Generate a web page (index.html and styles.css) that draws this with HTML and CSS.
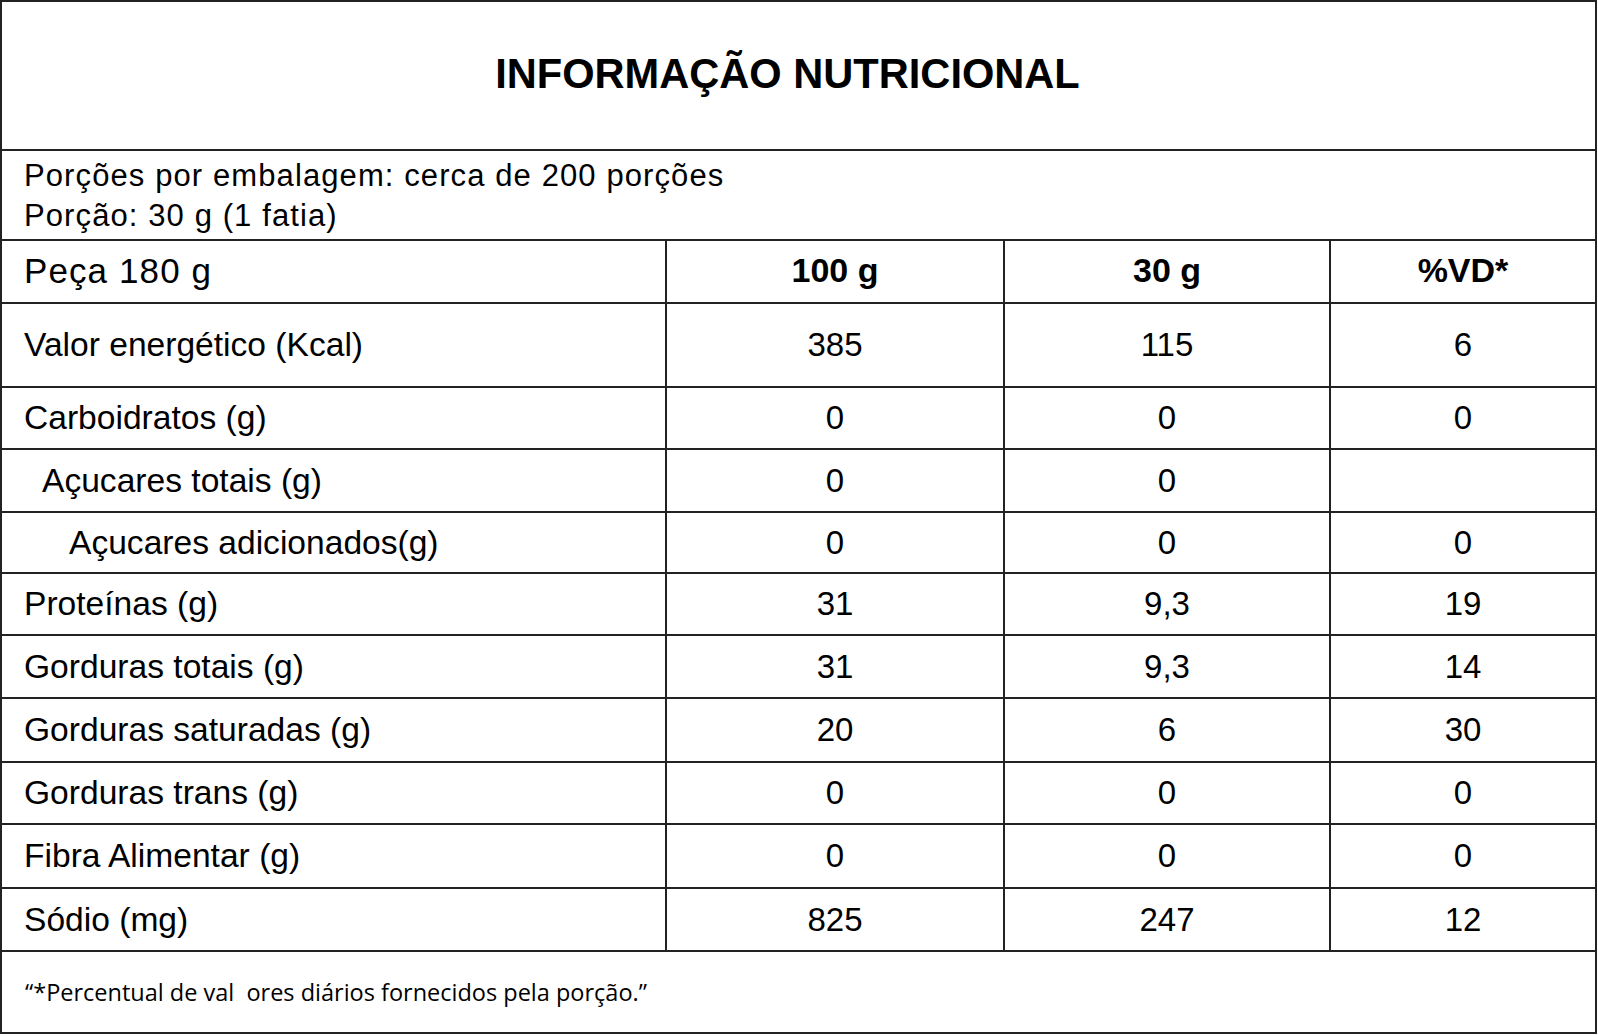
FILE: index.html
```html
<!DOCTYPE html>
<html lang="pt-BR">
<head>
<meta charset="utf-8">
<title>Informação Nutricional</title>
<link rel="stylesheet" href="styles.css">
</head>
<body>
<div class="label">
  <div class="title">INFORMAÇÃO NUTRICIONAL</div>
  <div class="portions">
    <div class="pline">Porções por embalagem: cerca de 200 porções</div>
    <div class="pline">Porção: 30 g (1 fatia)</div>
  </div>
  <div class="row h63 head">
    <div class="cell name piece">Peça 180 g</div>
    <div class="cell num bold">100 g</div>
    <div class="cell num bold">30 g</div>
    <div class="cell num bold">%VD*</div>
  </div>
  <div class="row h84">
    <div class="cell name">Valor energético (Kcal)</div>
    <div class="cell num">385</div>
    <div class="cell num">115</div>
    <div class="cell num">6</div>
  </div>
  <div class="row h62">
    <div class="cell name">Carboidratos (g)</div>
    <div class="cell num">0</div>
    <div class="cell num">0</div>
    <div class="cell num">0</div>
  </div>
  <div class="row h63">
    <div class="cell name ind1">Açucares totais (g)</div>
    <div class="cell num">0</div>
    <div class="cell num">0</div>
    <div class="cell num"></div>
  </div>
  <div class="row h61">
    <div class="cell name ind2">Açucares adicionados(g)</div>
    <div class="cell num">0</div>
    <div class="cell num">0</div>
    <div class="cell num">0</div>
  </div>
  <div class="row h62">
    <div class="cell name">Proteínas (g)</div>
    <div class="cell num">31</div>
    <div class="cell num">9,3</div>
    <div class="cell num">19</div>
  </div>
  <div class="row h63">
    <div class="cell name">Gorduras totais (g)</div>
    <div class="cell num">31</div>
    <div class="cell num">9,3</div>
    <div class="cell num">14</div>
  </div>
  <div class="row h64">
    <div class="cell name">Gorduras saturadas (g)</div>
    <div class="cell num">20</div>
    <div class="cell num">6</div>
    <div class="cell num">30</div>
  </div>
  <div class="row h62">
    <div class="cell name">Gorduras trans (g)</div>
    <div class="cell num">0</div>
    <div class="cell num">0</div>
    <div class="cell num">0</div>
  </div>
  <div class="row h64">
    <div class="cell name">Fibra Alimentar (g)</div>
    <div class="cell num">0</div>
    <div class="cell num">0</div>
    <div class="cell num">0</div>
  </div>
  <div class="row h63">
    <div class="cell name">Sódio (mg)</div>
    <div class="cell num">825</div>
    <div class="cell num">247</div>
    <div class="cell num">12</div>
  </div>
  <div class="footer"><span class="note">“*Percentual de val&nbsp; ores diários fornecidos pela porção.”</span></div>
</div>
</body>
</html>
```

FILE: styles.css
```css
html, body {
  margin: 0;
  padding: 0;
  background: #ffffff;
}

body {
  font-family: "Liberation Sans", Arial, sans-serif;
  color: #000;
}

.label {
  box-sizing: border-box;
  width: 1597px;
  height: 1034px;
  border: 2px solid #222;
  display: flex;
  flex-direction: column;
}

.title {
  box-sizing: border-box;
  height: 149px;
  border-bottom: 2px solid #222;
  display: flex;
  align-items: center;
  justify-content: center;
  padding: 0 22px 4px 0;
  font-weight: bold;
  font-size: 41.6px;
}

.portions {
  box-sizing: border-box;
  height: 90px;
  border-bottom: 2px solid #222;
  padding: 5px 0 0 22px;
  font-size: 31px;
  line-height: 40px;
  letter-spacing: 1.1px;
}

.row {
  box-sizing: border-box;
  display: grid;
  grid-template-columns: 665px 338px 326px 1fr;
  border-bottom: 2px solid #222;
}

.h61 { height: 61px; }
.h62 { height: 62px; }
.h63 { height: 63px; }
.h64 { height: 64px; }
.h84 { height: 84px; }

.cell {
  display: flex;
  align-items: center;
  font-size: 33px;
  border-right: 2px solid #222;
}

.cell:last-child {
  border-right: none;
}

.name {
  padding-left: 22px;
  font-size: 33.6px;
}

.name.ind1 {
  padding-left: 40px;
}

.name.ind2 {
  padding-left: 67px;
}

.name.piece {
  font-size: 35px;
  letter-spacing: 1.1px;
  padding-bottom: 2px;
}

.num {
  justify-content: center;
}

.bold {
  font-weight: bold;
  font-size: 34px;
  padding-bottom: 3px;
}

.footer {
  flex: 1;
  display: flex;
  align-items: center;
  padding-left: 23px;
}

.note {
  font-family: "Open Sans", "Noto Sans", sans-serif;
  font-size: 23.5px;
}
```
